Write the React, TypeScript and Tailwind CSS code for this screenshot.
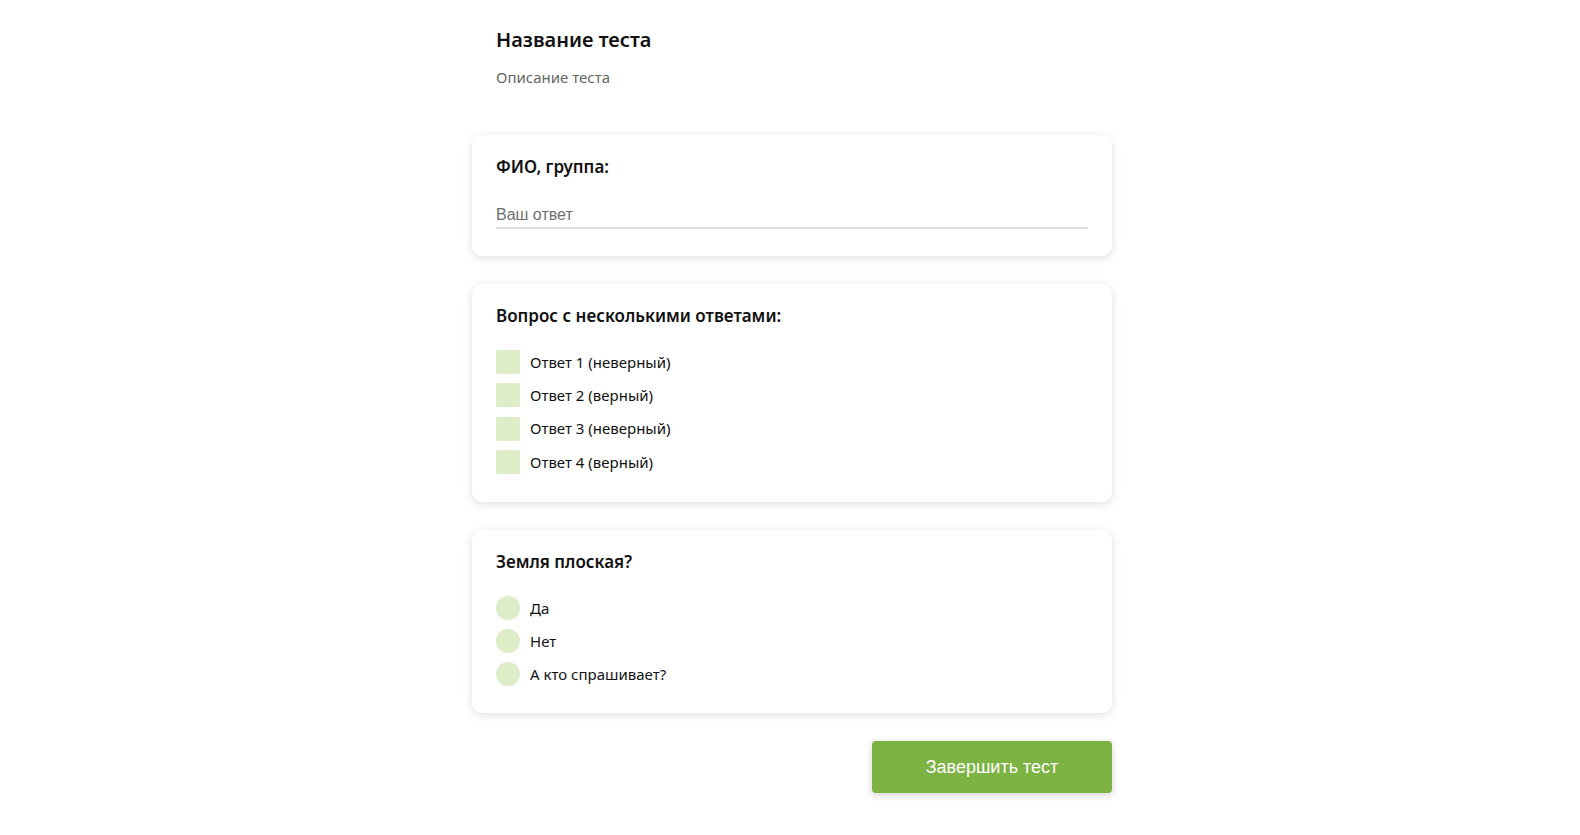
import React from "react";

const seg = { fontFamily: '"Noto Sans", "Open Sans", sans-serif' };
const arial = { fontFamily: '"Liberation Sans", Arial, sans-serif' };

function Card({ children, className = "" }: { children: React.ReactNode; className?: string }) {
  return (
    <div className={`w-[640px] bg-white rounded-[10px] shadow-[0_2px_10px_rgba(0,0,0,0.13)] px-6 pt-5 ${className}`}>
      {children}
    </div>
  );
}

export default function App() {
  const checks = ["Ответ 1 (неверный)", "Ответ 2 (верный)", "Ответ 3 (неверный)", "Ответ 4 (верный)"];
  const radios = ["Да", "Нет", "А кто спрашивает?"];
  return (
    <div className="min-h-screen bg-white flex justify-center pl-[4px]" style={seg}>
      <div className="w-[640px] flex flex-col">
        <div className="px-6 pt-[26px]">
          <h1 className="text-[20px] leading-[28px] font-semibold text-[#111]">Название теста</h1>
          <p className="mt-[12px] text-[15px] leading-[22px] text-[#666]">Описание теста</p>
        </div>
        <Card className="mt-[47px] pb-[27px]">
          <div className="text-[17px] leading-[24px] font-semibold text-[#111]">ФИО, группа:</div>
          <input
            placeholder="Ваш ответ"
            className="mt-[13px] w-full h-[37px] pt-[12px] pb-[2px] border-b-2 border-[#dedede] outline-none text-[16px] text-[#222] placeholder:text-[#6f6f6f] bg-transparent"
            style={arial}
          />
        </Card>
        <Card className="mt-[28px] pb-[28px]">
          <div className="text-[17px] leading-[24px] font-semibold text-[#111]">Вопрос с несколькими ответами:</div>
          <div className="mt-[22px] flex flex-col gap-[9.3px]">
            {checks.map((c) => (
              <label key={c} className="flex items-center gap-[10px] h-[24px] cursor-pointer">
                <span className="w-[24px] h-[24px] rounded-[2px] bg-[#dcedc8] shrink-0" />
                <span className="text-[15px] text-[#111]">{c}</span>
              </label>
            ))}
          </div>
        </Card>
        <Card className="mt-[28px] pb-[27px]">
          <div className="text-[17px] leading-[24px] font-semibold text-[#111]">Земля плоская?</div>
          <div className="mt-[22px] flex flex-col gap-[9.3px]">
            {radios.map((c) => (
              <label key={c} className="flex items-center gap-[10px] h-[24px] cursor-pointer">
                <span className="w-[24px] h-[24px] rounded-full bg-[#dcedc8] shrink-0" />
                <span className="text-[15px] text-[#111]">{c}</span>
              </label>
            ))}
          </div>
        </Card>
        <div className="mt-[28px] flex justify-end">
          <button
            className="w-[240px] h-[52px] rounded-[4px] bg-[#7cb342] text-white text-[18px] shadow-[0_2px_8px_rgba(0,0,0,0.18)]"
            style={arial}
          >
            Завершить тест
          </button>
        </div>
      </div>
    </div>
  );
}
